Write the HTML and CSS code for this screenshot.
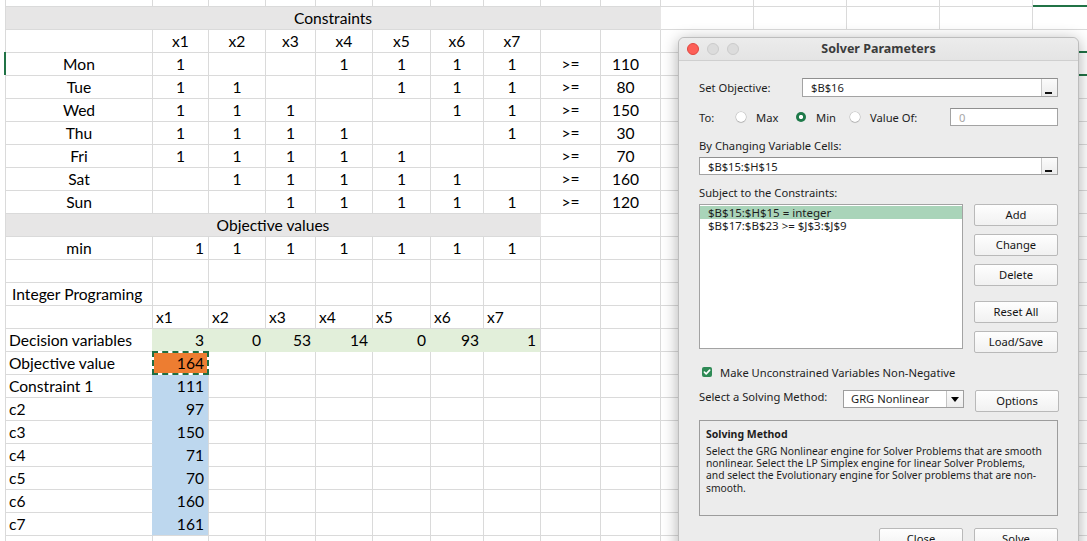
FILE: index.html
```html
<!DOCTYPE html>
<html>
<head>
<meta charset="utf-8">
<title>Solver</title>
<link rel="stylesheet" href="styles.css">
</head>
<body>
<div class="sheet">
  <!-- r0 partial -->
  <div class="cell"></div><div class="cell"></div><div class="cell"></div><div class="cell"></div><div class="cell"></div><div class="cell"></div><div class="cell"></div><div class="cell"></div><div class="cell"></div><div class="cell"></div><div class="cell"></div><div class="cell"></div><div class="cell"></div><div class="cell"></div><div class="cell colsel"></div>
  <!-- r1 -->
  <div class="cell band span10">Constraints</div><div class="cell"></div><div class="cell"></div><div class="cell"></div><div class="cell"></div><div class="cell"></div>
  <!-- r2 -->
  <div class="cell"></div><div class="cell">x1</div><div class="cell">x2</div><div class="cell">x3</div><div class="cell">x4</div><div class="cell">x5</div><div class="cell">x6</div><div class="cell">x7</div><div class="cell"></div><div class="cell"></div><div class="cell rest"></div>
  <!-- Mon -->
  <div class="cell rowsel">Mon</div><div class="cell">1</div><div class="cell"></div><div class="cell"></div><div class="cell">1</div><div class="cell">1</div><div class="cell">1</div><div class="cell">1</div><div class="cell">&gt;=</div><div class="cell val">110</div><div class="cell span4"></div><div class="cell active"></div>
  <!-- Tue -->
  <div class="cell">Tue</div><div class="cell">1</div><div class="cell">1</div><div class="cell"></div><div class="cell"></div><div class="cell">1</div><div class="cell">1</div><div class="cell">1</div><div class="cell">&gt;=</div><div class="cell val">80</div><div class="cell rest"></div>
  <!-- Wed -->
  <div class="cell">Wed</div><div class="cell">1</div><div class="cell">1</div><div class="cell">1</div><div class="cell"></div><div class="cell"></div><div class="cell">1</div><div class="cell">1</div><div class="cell">&gt;=</div><div class="cell val">150</div><div class="cell rest"></div>
  <!-- Thu -->
  <div class="cell">Thu</div><div class="cell">1</div><div class="cell">1</div><div class="cell">1</div><div class="cell">1</div><div class="cell"></div><div class="cell"></div><div class="cell">1</div><div class="cell">&gt;=</div><div class="cell val">30</div><div class="cell rest"></div>
  <!-- Fri -->
  <div class="cell">Fri</div><div class="cell">1</div><div class="cell">1</div><div class="cell">1</div><div class="cell">1</div><div class="cell">1</div><div class="cell"></div><div class="cell"></div><div class="cell">&gt;=</div><div class="cell val">70</div><div class="cell rest"></div>
  <!-- Sat -->
  <div class="cell">Sat</div><div class="cell"></div><div class="cell">1</div><div class="cell">1</div><div class="cell">1</div><div class="cell">1</div><div class="cell">1</div><div class="cell"></div><div class="cell">&gt;=</div><div class="cell val">160</div><div class="cell rest"></div>
  <!-- Sun -->
  <div class="cell">Sun</div><div class="cell"></div><div class="cell"></div><div class="cell">1</div><div class="cell">1</div><div class="cell">1</div><div class="cell">1</div><div class="cell">1</div><div class="cell">&gt;=</div><div class="cell val">120</div><div class="cell rest"></div>
  <!-- Objective values -->
  <div class="cell band span8">Objective values</div><div class="cell"></div><div class="cell"></div><div class="cell rest"></div>
  <!-- min -->
  <div class="cell">min</div><div class="cell r">1</div><div class="cell">1</div><div class="cell">1</div><div class="cell">1</div><div class="cell">1</div><div class="cell">1</div><div class="cell">1</div><div class="cell"></div><div class="cell"></div><div class="cell rest"></div>
  <!-- blank -->
  <div class="cell"></div><div class="cell"></div><div class="cell"></div><div class="cell"></div><div class="cell"></div><div class="cell"></div><div class="cell"></div><div class="cell"></div><div class="cell"></div><div class="cell"></div><div class="cell rest"></div>
  <!-- Integer Programing -->
  <div class="cell l indent">Integer Programing</div><div class="cell"></div><div class="cell"></div><div class="cell"></div><div class="cell"></div><div class="cell"></div><div class="cell"></div><div class="cell"></div><div class="cell"></div><div class="cell"></div><div class="cell rest"></div>
  <!-- headers -->
  <div class="cell"></div><div class="cell l">x1</div><div class="cell l">x2</div><div class="cell l">x3</div><div class="cell l">x4</div><div class="cell l">x5</div><div class="cell l">x6</div><div class="cell l">x7</div><div class="cell"></div><div class="cell"></div><div class="cell rest"></div>
  <!-- Decision variables -->
  <div class="cell l edge-green">Decision variables</div><div class="cell r green">3</div><div class="cell r green">0</div><div class="cell r green">53</div><div class="cell r green">14</div><div class="cell r green">0</div><div class="cell r green">93</div><div class="cell r green last">1</div><div class="cell"></div><div class="cell"></div><div class="cell rest"></div>
  <!-- Objective value -->
  <div class="cell l">Objective value</div><div class="cell r orange">164</div><div class="cell"></div><div class="cell"></div><div class="cell"></div><div class="cell"></div><div class="cell"></div><div class="cell"></div><div class="cell"></div><div class="cell"></div><div class="cell rest"></div>
  <!-- constraints -->
  <div class="cell l edge-blue">Constraint 1</div><div class="cell r blue">111</div><div class="cell"></div><div class="cell"></div><div class="cell"></div><div class="cell"></div><div class="cell"></div><div class="cell"></div><div class="cell"></div><div class="cell"></div><div class="cell rest"></div>
  <div class="cell l edge-blue">c2</div><div class="cell r blue">97</div><div class="cell"></div><div class="cell"></div><div class="cell"></div><div class="cell"></div><div class="cell"></div><div class="cell"></div><div class="cell"></div><div class="cell"></div><div class="cell rest"></div>
  <div class="cell l edge-blue">c3</div><div class="cell r blue">150</div><div class="cell"></div><div class="cell"></div><div class="cell"></div><div class="cell"></div><div class="cell"></div><div class="cell"></div><div class="cell"></div><div class="cell"></div><div class="cell rest"></div>
  <div class="cell l edge-blue">c4</div><div class="cell r blue">71</div><div class="cell"></div><div class="cell"></div><div class="cell"></div><div class="cell"></div><div class="cell"></div><div class="cell"></div><div class="cell"></div><div class="cell"></div><div class="cell rest"></div>
  <div class="cell l edge-blue">c5</div><div class="cell r blue">70</div><div class="cell"></div><div class="cell"></div><div class="cell"></div><div class="cell"></div><div class="cell"></div><div class="cell"></div><div class="cell"></div><div class="cell"></div><div class="cell rest"></div>
  <div class="cell l edge-blue">c6</div><div class="cell r blue">160</div><div class="cell"></div><div class="cell"></div><div class="cell"></div><div class="cell"></div><div class="cell"></div><div class="cell"></div><div class="cell"></div><div class="cell"></div><div class="cell rest"></div>
  <div class="cell l edge-blue">c7</div><div class="cell r blue blue-last">161</div><div class="cell"></div><div class="cell"></div><div class="cell"></div><div class="cell"></div><div class="cell"></div><div class="cell"></div><div class="cell"></div><div class="cell"></div><div class="cell rest"></div>
  <!-- partial -->
  <div class="cell"></div><div class="cell"></div><div class="cell"></div><div class="cell"></div><div class="cell"></div><div class="cell"></div><div class="cell"></div><div class="cell"></div><div class="cell"></div><div class="cell"></div><div class="cell rest"></div>
</div>

<div class="dialog">
  <div class="titlebar">
    <div class="lights"><span class="light red"></span><span class="light"></span><span class="light"></span></div>
    <div class="title">Solver Parameters</div>
  </div>
  <div class="dbody">
    <div class="row r-objective">
      <span class="lbl w-obj">Set Objective:</span>
      <div class="field grow"><span class="ftext">$B$16</span><span class="collapse"></span></div>
    </div>
    <div class="row r-to">
      <span class="lbl w-to">To:</span>
      <span class="opt w-max"><span class="radio"></span>Max</span>
      <span class="opt w-min"><span class="radio on"></span>Min</span>
      <span class="opt w-val"><span class="radio"></span>Value Of:</span>
      <div class="field grow"><span class="ftext grey">0</span></div>
    </div>
    <div class="caption cap1">By Changing Variable Cells:</div>
    <div class="field f2"><span class="ftext">$B$15:$H$15</span><span class="collapse"></span></div>
    <div class="caption cap2">Subject to the Constraints:</div>
    <div class="constraints">
      <div class="list">
        <div class="item sel">$B$15:$H$15 = integer</div>
        <div class="item">$B$17:$B$23 &gt;= $J$3:$J$9</div>
      </div>
      <div class="btncol">
        <div class="btn">Add</div>
        <div class="btn">Change</div>
        <div class="btn">Delete</div>
        <div class="btn gap">Reset All</div>
        <div class="btn">Load/Save</div>
      </div>
    </div>
    <div class="check-row">
      <svg class="checkbox" width="10" height="10" viewBox="0 0 10 10"><rect width="10" height="10" rx="2" fill="#2e8a55"/><path d="M2.4 5.1 L4.2 6.9 L7.7 3.1" stroke="#fff" stroke-width="1.6" fill="none" stroke-linecap="round" stroke-linejoin="round"/></svg>
      <span>Make Unconstrained Variables Non-Negative</span>
    </div>
    <div class="method-row">
      <span class="lbl w-method">Select a Solving Method:</span>
      <div class="select"><span class="stext">GRG Nonlinear</span><span class="arrowbox"><span class="tri"></span></span></div>
      <div class="btn">Options</div>
    </div>
    <div class="group">
      <div class="gtitle">Solving Method</div>
      <div class="gtext">
        <div>Select the GRG Nonlinear engine for Solver Problems that are smooth</div>
        <div>nonlinear. Select the LP Simplex engine for linear Solver Problems,</div>
        <div>and select the Evolutionary engine for Solver problems that are non-</div>
        <div>smooth.</div>
      </div>
    </div>
    <div class="footer">
      <div class="btn">Close</div>
      <div class="btn">Solve</div>
    </div>
  </div>
</div>
</body>
</html>
```
FILE: styles.css
```css
html, body {
  margin: 0;
  padding: 0;
}
body {
  width: 1087px;
  height: 541px;
  overflow: hidden;
  background: #fff;
  position: relative;
  font-family: Lato, "Liberation Sans", sans-serif;
}

/* ---------- spreadsheet ---------- */
.sheet {
  display: grid;
  grid-template-columns: 147px 56px 57px 50px 57px 58px 53px 57px 60px 60px 93px 93px 93px 93px 93px;
  grid-template-rows: 7px repeat(24, 23px);
  margin-left: 5px;
  border-left: 1px solid #dadada;
  width: max-content;
  font-size: 15.6px;
  color: #000;
}
.cell {
  box-sizing: border-box;
  border-right: 1px solid #dadada;
  border-bottom: 1px solid #dadada;
  line-height: 22px;
  white-space: nowrap;
  padding: 0 4px;
  text-align: center;
  position: relative;
}
.l { text-align: left; padding-left: 3px; }
.indent { padding-left: 6px; }
.r { text-align: right; padding-right: 4px; }
.val { padding-right: 14px; }
.span10 { grid-column: span 10; }
.span8 { grid-column: span 8; }
.span4 { grid-column: span 4; }
.rest { grid-column: span 5; }

.band { background: #e7e6e6; border-right-color: #e7e6e6; }
.green { background: #e2efda; border-right-color: #e2efda; border-bottom-color: #e2efda; }
.green.last { border-right-color: #dadada; }
.edge-green { border-right-color: #e2efda; }
.blue { background: #bdd7ee; border-bottom-color: #bdd7ee; }
.blue-last { border-bottom-color: #dadada; }
.edge-blue { border-right-color: #bdd7ee; }
.orange { background: #ed7d31; }
.orange::before,
.orange::after {
  content: "";
  position: absolute;
  left: -1px; top: -1px; right: -1px; bottom: -1px;
}
.orange::before { border: 2px solid #fff; }
.orange::after { border: 2px dashed #1f6f43; }

.colsel { border-bottom: 2px solid #217346; }
.active::after {
  content: "";
  position: absolute;
  left: -2px; top: -2px; right: -1px; bottom: -1px;
  border: 2px solid #217346;
}
.rowsel::before {
  content: "";
  position: absolute;
  left: -2px; top: -1px; bottom: 0;
  width: 2px;
  background: #217346;
}

/* ---------- dialog ---------- */
.dialog {
  position: absolute;
  left: 678px;
  top: 37px;
  width: 401px;
  height: 530px;
  box-sizing: border-box;
  background: #ececec;
  border: 1px solid #bdbdbd;
  border-radius: 6px 6px 0 0;
  box-shadow: 0 3px 16px rgba(0,0,0,0.32);
  font-family: "Noto Sans", "DejaVu Sans", sans-serif;
  font-size: 11.2px;
  color: #1d1d1d;
}
.titlebar {
  height: 22px;
  border-bottom: 1px solid #cfcfcf;
  background: linear-gradient(#ececec, #e4e4e4);
  border-radius: 6px 6px 0 0;
  display: grid;
  grid-template-areas: "bar";
  align-items: center;
}
.lights {
  grid-area: bar;
  display: flex;
  gap: 8px;
  padding-left: 8px;
}
.light {
  width: 12px;
  height: 12px;
  box-sizing: border-box;
  border-radius: 50%;
  background: #dcdcdc;
  border: 1px solid #cbcbcb;
}
.light.red { background: #fd5f57; border-color: #e0463f; }
.title {
  grid-area: bar;
  justify-self: center;
  font-weight: bold;
  font-size: 12.5px;
  color: #3b3b3b;
  line-height: 22px;
}
.dbody {
  padding: 0 20px;
  display: flex;
  flex-direction: column;
}
.row { display: flex; align-items: center; }
.r-objective { margin-top: 17px; height: 19px; }
.r-to { margin-top: 11px; height: 18px; }
.lbl { white-space: nowrap; }
.w-obj { width: 103px; flex: none; }
.w-to { width: 37px; flex: none; }
.w-max { width: 60px; }
.w-min { width: 54px; }
.w-val { width: 100px; }
.w-method { width: 144px; flex: none; line-height: 14px; }
.opt { display: flex; align-items: center; flex: none; white-space: nowrap; }
.radio {
  width: 10px;
  height: 10px;
  border-radius: 50%;
  background: #fff;
  box-shadow: 0 0 0 0.5px rgba(0,0,0,0.22), 0 1px 1px rgba(0,0,0,0.12);
  margin-right: 10px;
  flex: none;
}
.radio.on {
  background: radial-gradient(circle, #fff 0 1.8px, #1f7a4a 2.4px);
  box-shadow: none;
}
.grow { flex: 1; }
.field {
  box-sizing: border-box;
  background: #fff;
  border: 1px solid #a3a3a3;
  border-top-color: #8f8f8f;
  display: flex;
  align-items: stretch;
  height: 100%;
}
.ftext {
  flex: 1;
  padding-left: 8px;
  display: flex;
  align-items: center;
  white-space: nowrap;
}
.ftext.grey { color: #a6a6a6; }
.collapse {
  width: 15px;
  flex: none;
  border-left: 1px solid #c7c7c7;
  background: linear-gradient(#fbfbfb, #ececec);
  position: relative;
}
.collapse::after {
  content: "";
  position: absolute;
  left: 3px;
  bottom: 2px;
  width: 7px;
  height: 2px;
  background: #111;
}
.caption { line-height: 14px; white-space: nowrap; }
.cap1 { margin-top: 13px; }
.f2 { margin-top: 4px; height: 18px; }
.cap2 { margin-top: 11px; }
.constraints {
  margin-top: 4px;
  height: 149px;
  display: flex;
  gap: 11px;
  align-items: flex-start;
}
.list {
  flex: 1;
  height: 145px;
  box-sizing: border-box;
  background: #fff;
  border: 1px solid #a3a3a3;
  padding-top: 1px;
}
.item {
  line-height: 13px;
  padding-left: 8px;
  white-space: nowrap;
  font-size: 11.5px;
}
.item.sel { background: #a9d4b9; }
.btncol {
  width: 84px;
  display: flex;
  flex-direction: column;
  gap: 8px;
}
.btn {
  box-sizing: border-box;
  width: 84px;
  height: 22px;
  line-height: 20px;
  text-align: center;
  background: linear-gradient(#fefefe, #f1f1f1);
  border: 1px solid #b9b9b9;
  border-radius: 2px;
  color: #141414;
  flex: none;
}
.btn.gap { margin-top: 7px; }
.check-row {
  margin-top: 12px;
  height: 14px;
  display: flex;
  align-items: center;
  white-space: nowrap;
}
.checkbox { margin-left: 3px; margin-right: 8px; flex: none; }
.method-row {
  margin-top: 11px;
  display: flex;
  align-items: flex-start;
  gap: 0;
}
.select {
  width: 121px;
  height: 18px;
  box-sizing: border-box;
  background: #fff;
  border: 1px solid #9e9e9e;
  display: flex;
  margin-right: 11px;
  flex: none;
}
.stext {
  flex: 1;
  padding-left: 7px;
  line-height: 16px;
  white-space: nowrap;
}
.arrowbox {
  width: 16px;
  border-left: 1px solid #c4c4c4;
  background: linear-gradient(#fbfbfb, #ededed);
  display: flex;
  align-items: center;
  justify-content: center;
}
.tri {
  width: 0;
  height: 0;
  border-left: 4.5px solid transparent;
  border-right: 4.5px solid transparent;
  border-top: 5px solid #000;
}
.group {
  margin-top: 8px;
  height: 96px;
  box-sizing: border-box;
  border: 1px solid #9c9c9c;
  padding: 7px 6px 0;
}
.gtitle {
  font-weight: bold;
  font-size: 10.5px;
  line-height: 13px;
}
.gtext {
  margin-top: 4px;
  font-size: 10.3px;
  line-height: 12.2px;
  white-space: nowrap;
}
.footer {
  margin-top: 12px;
  display: flex;
  justify-content: flex-end;
  gap: 11px;
}
```
